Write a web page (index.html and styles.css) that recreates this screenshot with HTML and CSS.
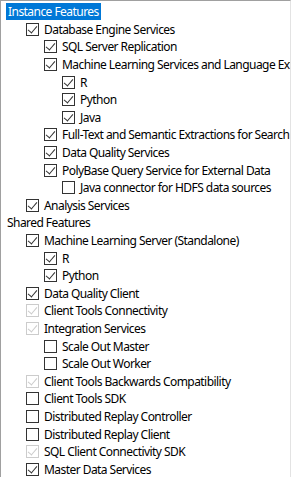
FILE: index.html
```html
<!DOCTYPE html>
<html>
<head>
<meta charset="utf-8">
<link rel="stylesheet" href="styles.css">
</head>
<body>
<div class="panel">
  <div class="row l0"><span class="label sel">Instance Features</span></div>
  <div class="row l1"><span class="cb on"></span><span class="label">Database Engine Services</span></div>
  <div class="row l2"><span class="cb on"></span><span class="label">SQL Server Replication</span></div>
  <div class="row l2"><span class="cb on"></span><span class="label">Machine Learning Services and Language Extensions</span></div>
  <div class="row l3"><span class="cb on"></span><span class="label">R</span></div>
  <div class="row l3"><span class="cb on"></span><span class="label">Python</span></div>
  <div class="row l3"><span class="cb on"></span><span class="label">Java</span></div>
  <div class="row l2"><span class="cb on"></span><span class="label">Full-Text and Semantic Extractions for Search</span></div>
  <div class="row l2"><span class="cb on"></span><span class="label">Data Quality Services</span></div>
  <div class="row l2"><span class="cb on"></span><span class="label">PolyBase Query Service for External Data</span></div>
  <div class="row l3"><span class="cb"></span><span class="label">Java connector for HDFS data sources</span></div>
  <div class="row l1"><span class="cb on"></span><span class="label">Analysis Services</span></div>
  <div class="row l0"><span class="label">Shared Features</span></div>
  <div class="row l1"><span class="cb on"></span><span class="label">Machine Learning Server (Standalone)</span></div>
  <div class="row l2"><span class="cb on"></span><span class="label">R</span></div>
  <div class="row l2"><span class="cb on"></span><span class="label">Python</span></div>
  <div class="row l1"><span class="cb on"></span><span class="label">Data Quality Client</span></div>
  <div class="row l1"><span class="cb on dis"></span><span class="label">Client Tools Connectivity</span></div>
  <div class="row l1"><span class="cb on dis"></span><span class="label">Integration Services</span></div>
  <div class="row l2"><span class="cb"></span><span class="label">Scale Out Master</span></div>
  <div class="row l2"><span class="cb"></span><span class="label">Scale Out Worker</span></div>
  <div class="row l1"><span class="cb on dis"></span><span class="label">Client Tools Backwards Compatibility</span></div>
  <div class="row l1"><span class="cb"></span><span class="label">Client Tools SDK</span></div>
  <div class="row l1"><span class="cb"></span><span class="label">Distributed Replay Controller</span></div>
  <div class="row l1"><span class="cb"></span><span class="label">Distributed Replay Client</span></div>
  <div class="row l1"><span class="cb on dis"></span><span class="label">SQL Client Connectivity SDK</span></div>
  <div class="row l1"><span class="cb on"></span><span class="label">Master Data Services</span></div>
</div>
</body>
</html>
```
FILE: styles.css
```css
html, body {
  margin: 0;
  padding: 0;
  background: #fff;
  overflow: hidden;
}
.panel {
  width: 291px;
  height: 477px;
  box-sizing: border-box;
  border-top: 1px solid #a0a0a0;
  border-left: 1px solid #a0a0a0;
  border-right: 1px solid #e3e3e3;
  padding-top: 2px;
  overflow: hidden;
  font-family: "Noto Sans", "Open Sans", sans-serif;
  font-size: 12px;
  color: #000;
}
.row {
  height: 17.6px;
  display: flex;
  align-items: center;
  white-space: nowrap;
}
.l0 { padding-left: 5px; }
.l1 { padding-left: 25px; }
.l2 { padding-left: 43px; }
.l3 { padding-left: 61px; }
.label {
  line-height: 17px;
  padding: 0 1px;
  letter-spacing: -0.55px;
}
.label.sel {
  background: #0078d7;
  color: #fff;
  padding: 0 2px 0 2px;
}
.cb {
  flex: none;
  width: 13px;
  height: 13px;
  box-sizing: border-box;
  border: 1px solid #333;
  margin-right: 4px;
  position: relative;
  background: #fff;
}
.cb.on::after {
  content: "";
  position: absolute;
  left: 3px;
  top: 0px;
  width: 4px;
  height: 8px;
  border-right: 1.3px solid #333;
  border-bottom: 1.3px solid #333;
  transform: rotate(40deg);
}
.cb.dis {
  border-color: #cccccc;
}
.cb.dis::after {
  border-color: #cccccc;
}
```
